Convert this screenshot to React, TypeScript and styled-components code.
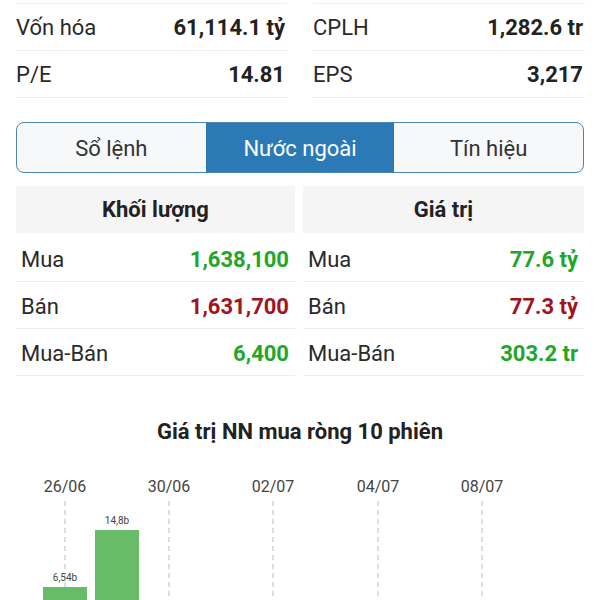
import React from "react";
import styled, { createGlobalStyle } from "styled-components";

const GlobalStyle = createGlobalStyle`
  html, body {
    margin: 0;
    padding: 0;
    background: #ffffff;
    overflow: hidden;
  }
  body {
    font-family: Roboto, "Noto Sans", "Liberation Sans", sans-serif;
    color: #222222;
  }
`;

const Page = styled.div`
  padding: 3px 16px 0 16px;
  width: 600px;
  height: 600px;
  box-sizing: border-box;
  overflow: hidden;
`;

const StatsGrid = styled.div`
  display: grid;
  grid-template-columns: 271px 272px;
  column-gap: 26px;
`;

const StatsColumn = styled.div`
  border-top: 1px solid #f0f0f0;
`;

const StatRow = styled.div`
  display: flex;
  align-items: center;
  justify-content: space-between;
  padding-top: 1px;
  box-sizing: border-box;
  height: 47px;
  border-bottom: 1px solid #eeeeee;
  font-size: 22px;
`;

const StatLabel = styled.span`
  color: #2a2a2a;
`;

const StatValue = styled.span`
  font-weight: 700;
  color: #222222;
  padding-right: 2px;
`;

const Tabs = styled.div`
  display: grid;
  grid-template-columns: repeat(3, 1fr);
  margin-top: 24px;
  height: 51px;
  width: 568px;
  box-sizing: border-box;
  border: 1.5px solid #4a87b8;
  border-radius: 8px;
  overflow: hidden;
  background: #f6f8fa;
`;

const Tab = styled.div<{ $active?: boolean }>`
  display: flex;
  align-items: center;
  justify-content: center;
  padding-top: 2px;
  font-size: 22px;
  background: ${(p) => (p.$active ? "#2b7ab6" : "transparent")};
  color: ${(p) => (p.$active ? "#ffffff" : "#333333")};
`;

const Tables = styled.div`
  display: grid;
  grid-template-columns: 279px 281px;
  column-gap: 8px;
  margin-top: 13px;
`;

const Table = styled.div`
  display: flex;
  flex-direction: column;
`;

const TableHead = styled.div`
  height: 47px;
  display: flex;
  align-items: center;
  justify-content: center;
  background: #f5f5f5;
  font-size: 22px;
  font-weight: 700;
  color: #222222;
  margin-bottom: 2px;
`;

const TableRow = styled.div`
  display: flex;
  align-items: center;
  justify-content: space-between;
  height: 47px;
  box-sizing: border-box;
  padding: 3px 6px 0 5px;
  border-bottom: 1px solid #eeeeee;
  font-size: 22px;
`;

const Amount = styled.span<{ $tone: "up" | "down" }>`
  font-weight: 700;
  color: ${(p) => (p.$tone === "up" ? "#22a52b" : "#a3131c")};
`;

const ChartTitle = styled.div`
  margin-top: 43px;
  text-align: center;
  font-size: 22px;
  font-weight: 700;
  color: #222222;
`;

const ChartBox = styled.div`
  margin-top: 19px;
  height: 160px;
`;

const stats = [
  [
    { label: "Vốn hóa", value: "61,114.1 tỷ" },
    { label: "P/E", value: "14.81" },
  ],
  [
    { label: "CPLH", value: "1,282.6 tr" },
    { label: "EPS", value: "3,217" },
  ],
];

const volume = [
  { label: "Mua", value: "1,638,100", tone: "up" as const },
  { label: "Bán", value: "1,631,700", tone: "down" as const },
  { label: "Mua-Bán", value: "6,400", tone: "up" as const },
];

const worth = [
  { label: "Mua", value: "77.6 tỷ", tone: "up" as const },
  { label: "Bán", value: "77.3 tỷ", tone: "down" as const },
  { label: "Mua-Bán", value: "303.2 tr", tone: "up" as const },
];

// bars, tops in chart coords (svg)
const bars = [
  { top: 124, label: "6,54b" },
  { top: 67, label: "14,8b" },
];
const dates = ["26/06", "30/06", "02/07", "04/07", "08/07"];
const step = 52;
const firstCenter = 49;
const chartH = 160;

const Chart = () => (
  <svg width="568" height={chartH} viewBox={`0 0 568 ${chartH}`}>
    {dates.map((d, i) => {
      const x = firstCenter + step * 2 * i + (i > 2 ? 1 : 0);
      return (
        <g key={d}>
          <text
            x={x}
            y={29}
            textAnchor="middle"
            fontSize="16"
            fill="#444"
            fontFamily="Roboto, sans-serif"
          >
            {d}
          </text>
          <line
            x1={x}
            x2={x}
            y1={38}
            y2={chartH}
            stroke="#bdbdbd"
            strokeWidth="1"
            strokeDasharray="5 4"
          />
        </g>
      );
    })}
    {bars.map((b, i) => {
      const cx = firstCenter + step * i;
      return (
        <g key={b.label}>
          <rect x={cx - 22} y={b.top} width={44} height={chartH - b.top} fill="#69bc67" />
          <text
            x={cx}
            y={b.top - 6}
            textAnchor="middle"
            fontSize="10"
            fill="#444"
            fontFamily="Roboto, sans-serif"
          >
            {b.label}
          </text>
        </g>
      );
    })}
  </svg>
);

const App = () => {
  return (
    <>
      <GlobalStyle />
      <Page>
        <StatsGrid>
          {stats.map((col, i) => (
            <StatsColumn key={i}>
              {col.map((s) => (
                <StatRow key={s.label}>
                  <StatLabel>{s.label}</StatLabel>
                  <StatValue>{s.value}</StatValue>
                </StatRow>
              ))}
            </StatsColumn>
          ))}
        </StatsGrid>

        <Tabs>
          <Tab>Sổ lệnh</Tab>
          <Tab $active>Nước ngoài</Tab>
          <Tab>Tín hiệu</Tab>
        </Tabs>

        <Tables>
          <Table>
            <TableHead>Khối lượng</TableHead>
            {volume.map((r) => (
              <TableRow key={r.label}>
                <StatLabel>{r.label}</StatLabel>
                <Amount $tone={r.tone}>{r.value}</Amount>
              </TableRow>
            ))}
          </Table>
          <Table>
            <TableHead>Giá trị</TableHead>
            {worth.map((r) => (
              <TableRow key={r.label}>
                <StatLabel>{r.label}</StatLabel>
                <Amount $tone={r.tone}>{r.value}</Amount>
              </TableRow>
            ))}
          </Table>
        </Tables>

        <ChartTitle>Giá trị NN mua ròng 10 phiên</ChartTitle>
        <ChartBox>
          <Chart />
        </ChartBox>
      </Page>
    </>
  );
};

export default App;
